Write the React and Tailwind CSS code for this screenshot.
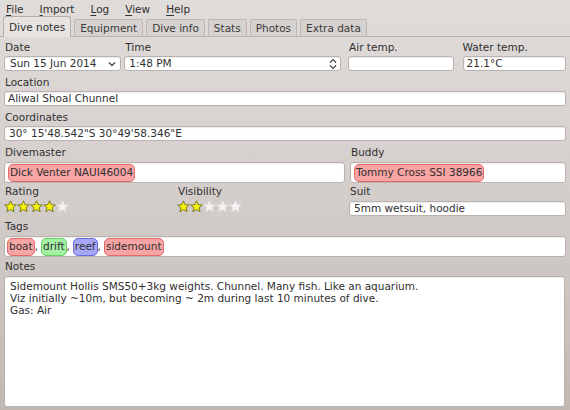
import React from "react";

const Mn = ({ c, rest }) => (
  <span>
    <span className="underline underline-offset-2">{c}</span>
    {rest}
  </span>
);

function Star({ on }) {
  return (
    <svg width="13" height="13" viewBox="0 0 24 24">
      <path
        d="M12 1.5l3.1 7.1 7.6.6-5.8 5 1.8 7.5L12 17.7l-6.7 4 1.8-7.5-5.8-5 7.6-.6z"
        fill={on ? "#f5f20a" : "#f4f4f4"}
        stroke={on ? "#6b6a20" : "#e2e2e2"}
        strokeWidth="1.6"
        strokeLinejoin="round"
      />
    </svg>
  );
}

function Stars({ n }) {
  return (
    <div className="flex h-[13px] items-center">
      {[0, 1, 2, 3, 4].map((i) => (
        <Star key={i} on={i < n} />
      ))}
    </div>
  );
}

const field =
  "bg-white border border-[#b9b2ae] rounded-[3px] shadow-[inset_0_1px_1px_rgba(0,0,0,0.08)]";

function Label({ children, className = "" }) {
  return <div className={`h-[12px] leading-[12px] pl-px ${className}`}>{children}</div>;
}

function Chip({ color, children }) {
  const styles = {
    red: "bg-[#f7a4a4] border-[#e46a6a]",
    green: "bg-[#a4f1a4] border-[#64d064]",
    blue: "bg-[#a6a6f7] border-[#6a6ae4]",
  };
  return (
    <span className={`inline-block border rounded-[5px] px-[1px] leading-[15px] h-[18px] ${styles[color]}`}>
      {children}
    </span>
  );
}

export default function App() {
  const tabs = ["Dive notes", "Equipment", "Dive info", "Stats", "Photos", "Extra data"];
  return (
    <div
      className="w-[570px] h-[410px] overflow-hidden bg-gradient-to-b from-[#e0dcda] via-[#d3cdca] to-[#c0b8b3] text-[#303030] text-[10.5px]"
      style={{ fontFamily: '"DejaVu Sans", sans-serif' }}
    >
      {/* menu bar */}
      <div className="h-[17px] flex items-center gap-[16px] pl-[6px] pt-[2px]">
        <Mn c="F" rest="ile" />
        <Mn c="I" rest="mport" />
        <Mn c="L" rest="og" />
        <Mn c="V" rest="iew" />
        <Mn c="H" rest="elp" />
      </div>

      {/* tabs */}
      <div className="flex items-end pl-[3px] gap-[3px] h-[20px] border-b border-[#b9b2ae]">
        {tabs.map((t, i) =>
          i === 0 ? (
            <div
              key={t}
              className="h-[21px] -mb-px px-[5px] leading-[20px] bg-[#e6e3e1] border border-b-0 border-[#b4ada9] rounded-t-[3px]"
            >
              {t}
            </div>
          ) : (
            <div
              key={t}
              className="h-[17px] px-[5px] leading-[17px] bg-[#d6d2cf] border border-b-0 border-[#bdb6b2] rounded-t-[2px] text-[#3a3a3a]"
            >
              {t}
            </div>
          )
        )}
      </div>

      {/* form */}
      <div className="px-[4px] pt-[4px] flex flex-col">
        <div className="flex gap-[3px]">
          <div className="w-[119px]">
            <Label>Date</Label>
            <div className={`${field} mt-[3px] h-[15px] flex items-center justify-between pl-[5px] pr-[4px]`}>
              <span>Sun 15 Jun 2014</span>
              <svg width="8" height="6" viewBox="0 0 8 6">
                <path d="M1 1.5l3 3 3-3" stroke="#444" strokeWidth="1.3" fill="none" />
              </svg>
            </div>
          </div>
          <div className="w-[220px]">
            <Label>Time</Label>
            <div className={`${field} mt-[3px] h-[15px] flex items-center justify-between pl-[4px] pr-[3px]`}>
              <span>1:48 PM</span>
              <svg width="8" height="12" viewBox="0 0 8 12">
                <path d="M1 4.5l3-3 3 3M1 7.5l3 3 3-3" stroke="#444" strokeWidth="1.2" fill="none" />
              </svg>
            </div>
          </div>
          <div className="w-[107px] ml-[4px]">
            <Label>Air temp.</Label>
            <div className={`${field} mt-[3px] h-[15px]`} />
          </div>
          <div className="w-[107px] ml-[4px]">
            <Label className="ml-[1px]">Water temp.</Label>
            <div className={`${field} mt-[3px] h-[15px] ml-[2px] pl-[3px] leading-[13px]`}>21.1°C</div>
          </div>
        </div>

        <Label className="mt-[5px]">Location</Label>
        <div className={`${field} mt-[3px] h-[15px] pl-[3px] leading-[13px]`}>Aliwal Shoal Chunnel</div>

        <Label className="mt-[5px]">Coordinates</Label>
        <div className={`${field} mt-[3px] h-[15px] pl-[4px] leading-[13px]`}>
          30° 15'48.542"S 30°49'58.346"E
        </div>

        <div className="flex gap-[5px] mt-[5px]">
          <div className="w-[341px]">
            <Label>Divemaster</Label>
            <div className={`${field} mt-[4px] h-[21px] flex items-center pl-[3px]`}>
              <Chip color="red">Dick Venter NAUI46004</Chip>
            </div>
          </div>
          <div className="flex-1">
            <Label>Buddy</Label>
            <div className={`${field} mt-[4px] h-[21px] flex items-center pl-[3px]`}>
              <Chip color="red">Tommy Cross SSI 38966</Chip>
            </div>
          </div>
        </div>

        <div className="flex mt-[2px]">
          <div className="w-[172px]">
            <Label>Rating</Label>
            <div className="mt-[3px]">
              <Stars n={4} />
            </div>
          </div>
          <div className="w-[173px]">
            <Label className="ml-[1px]">Visibility</Label>
            <div className="mt-[3px] ml-[1px]">
              <Stars n={2} />
            </div>
          </div>
          <div className="flex-1">
            <Label>Suit</Label>
            <div className={`${field} mt-[4px] h-[15px] pl-[4px] leading-[13px]`}>5mm wetsuit, hoodie</div>
          </div>
        </div>

        <Label className="mt-[4px]">Tags</Label>
        <div className={`${field} mt-[4px] h-[21px] flex items-center pl-[2px]`}>
          <Chip color="red">boat</Chip>
          <span className="mr-[3px]">,</span>
          <Chip color="green">drift</Chip>
          <span className="mr-[3px]">,</span>
          <Chip color="blue">reef</Chip>
          <span className="mr-[3px]">,</span>
          <Chip color="red">sidemount</Chip>
        </div>

        <Label className="mt-[3px]">Notes</Label>
        <div className={`${field} mt-[4px] h-[131px] mr-[1px] pl-[5px] pt-[3px] leading-[12px]`}>
          <div>Sidemount Hollis SMS50+3kg weights. Chunnel. Many fish. Like an aquarium.</div>
          <div>Viz initially ~10m, but becoming ~ 2m during last 10 minutes of dive.</div>
          <div>Gas: Air</div>
        </div>
      </div>
    </div>
  );
}
